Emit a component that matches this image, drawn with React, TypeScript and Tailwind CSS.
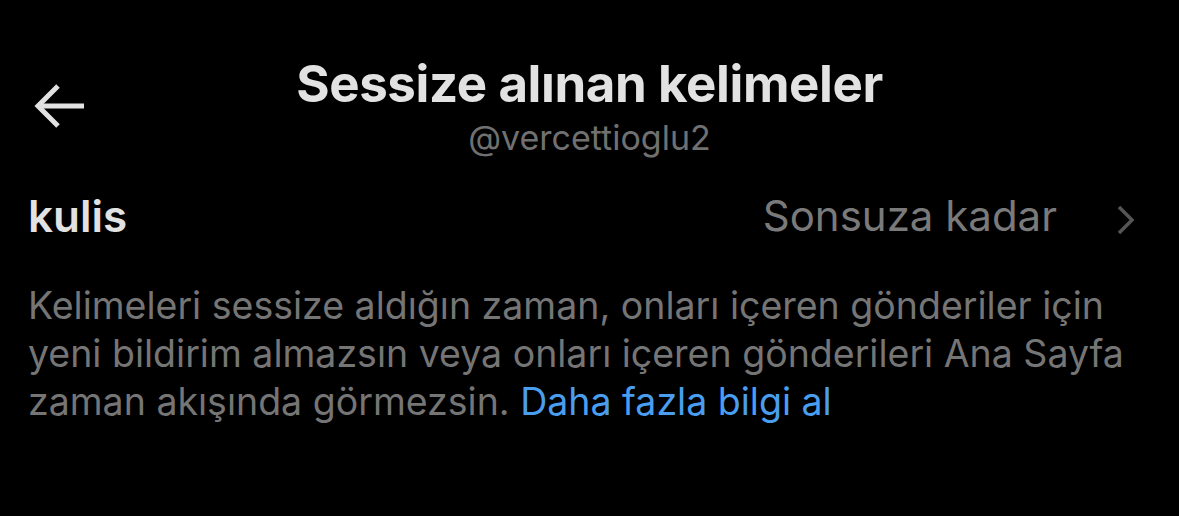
import React from 'react';

const App: React.FC = () => {
  return (
    <div className="w-[1179px] h-[516px] bg-black overflow-hidden" style={{ fontFamily: 'Inter, "Noto Sans", sans-serif' }}>
      <header className="grid grid-cols-[1fr_auto_1fr] items-start pt-[56px]">
        <div className="pl-[33px] pt-[26px]">
          <svg width="54" height="48" viewBox="0 0 54 48" fill="none" stroke="#e2e2e2" strokeWidth="5" strokeLinecap="butt">
            <path d="M51 24H6" />
            <path d="M25 4L5 24l20 20" />
          </svg>
        </div>
        <div className="flex flex-col items-center">
          <h1 className="text-[51px] leading-[56px] font-bold text-[#e2e2e2] tracking-[-0.4px]">Sessize alınan kelimeler</h1>
          <span className="mt-[6px] text-[34px] leading-[40px] text-[#707070]">@vercettioglu2</span>
        </div>
        <div />
      </header>

      <div className="flex items-center justify-between pl-[28px] pr-[42px] mt-[32px]">
        <span className="text-[44px] leading-[52px] font-semibold text-[#e2e2e2]">kulis</span>
        <div className="flex items-center gap-[58px]">
          <span className="text-[42px] leading-[52px] text-[#7a7a7a]">Sonsuza kadar</span>
          <svg className="mt-[8px]" width="22" height="32" viewBox="0 0 22 32" fill="none" stroke="#555" strokeWidth="3.5">
            <path d="M4 3l13 13L4 29" />
          </svg>
        </div>
      </div>

      <p className="pl-[28px] mt-[40px] text-[37.5px] leading-[48px] text-[#757575]">
        Kelimeleri sessize aldığın zaman, onları içeren gönderiler için<br />
        yeni bildirim almazsın veya onları içeren gönderileri Ana Sayfa<br />
        zaman akışında görmezsin. <span className="text-[#4a9ef0]">Daha fazla bilgi al</span>
      </p>
    </div>
  );
};

export default App;
